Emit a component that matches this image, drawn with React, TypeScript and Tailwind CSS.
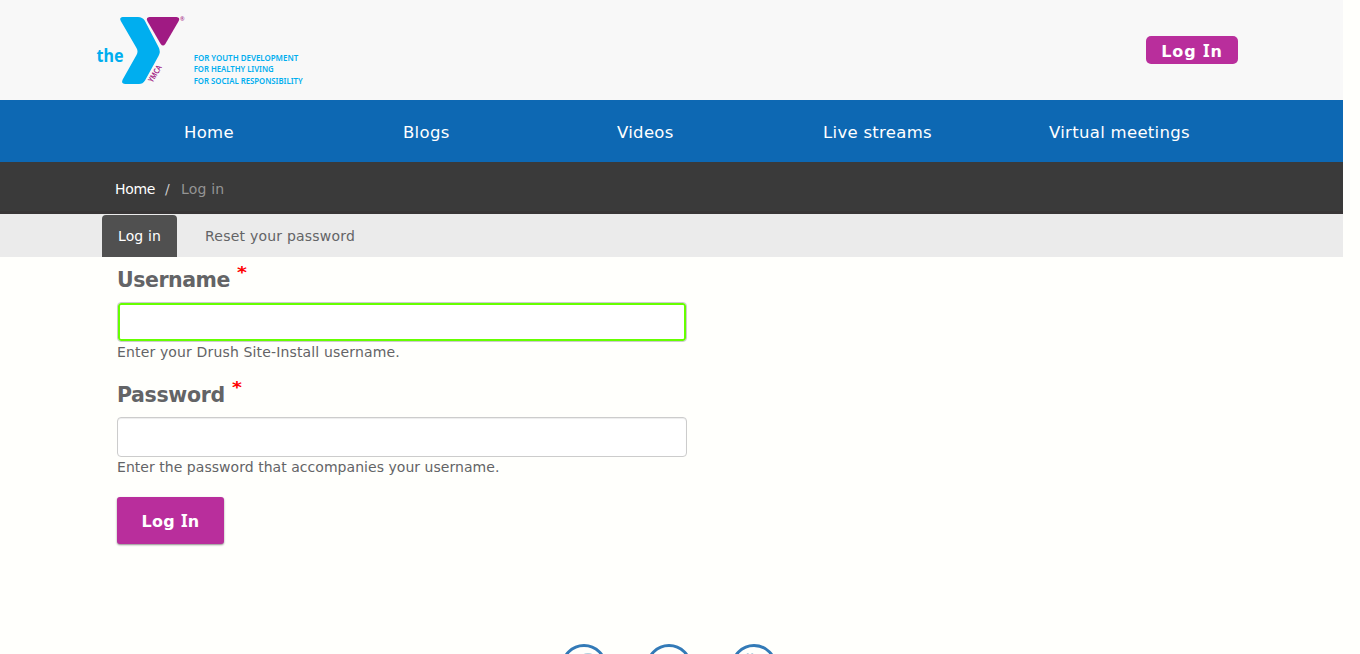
import { FaFacebookF, FaTwitter } from "react-icons/fa";

const navItems = [
  { label: "Home", box: "w-[51px] ml-[184px]" },
  { label: "Blogs", box: "w-[47px] ml-[168px]" },
  { label: "Videos", box: "w-[57px] ml-[167px]" },
  { label: "Live streams", box: "w-[109px] ml-[149px]" },
  { label: "Virtual meetings", box: "w-[141px] ml-[117px]" },
];

function Logo() {
  return (
    <svg className="ml-[90px] mt-[5px] h-[90px] w-[230px] overflow-visible" viewBox="90 5 230 90">
      <path
        d="M122.5 17H138Q142.500 17 144.700 20.500L158.500 47Q161 51.500 158.500 56L145 80.500Q142.800 84 139 84H125Q120.700 83.500 122.700 79.500L136.500 55Q138.500 51.500 136.500 48L120.800 21Q119 17.700 122.500 17Z"
        fill="#00aeef"
      />
      <path
        d="M149.500 17H176.500Q180.500 17.500 178.700 21L165.300 44Q163 47 160.700 44L147.300 21Q145.700 17.500 149.500 17Z"
        fill="#a01a83"
      />
      <g fontFamily="'Noto Sans', sans-serif" fontWeight="700" fill="#00aeef">
        <text x="96.500" y="61.700" fontSize="17.500" textLength="27" lengthAdjust="spacingAndGlyphs">the</text>
        <g fontSize="8.600" fontWeight="600">
          <text x="193.700" y="61" textLength="104.500" lengthAdjust="spacingAndGlyphs">FOR YOUTH DEVELOPMENT</text>
          <text x="193.700" y="72.400" textLength="80" lengthAdjust="spacingAndGlyphs">FOR HEALTHY LIVING</text>
          <text x="193.700" y="83.900" textLength="109" lengthAdjust="spacingAndGlyphs">FOR SOCIAL RESPONSIBILITY</text>
        </g>
      </g>
      <g fill="#a01a83" fontFamily="'Noto Sans', sans-serif">
        <text transform="translate(152.600 83) rotate(-59)" fontSize="8" fontWeight="600" textLength="18.500" lengthAdjust="spacingAndGlyphs">YMCA</text>
        <text x="180" y="21.300" fontSize="5.500">®</text>
      </g>
    </svg>
  );
}

function LogInText() {
  return (
    <span className="whitespace-nowrap">
      Log <span className="font-['Noto_Sans',sans-serif] text-[17px] leading-none">I</span>n
    </span>
  );
}

function YoutubeIcon({ size }: { size: number }) {
  return (
    <svg width={size} height={size} viewBox="0 0 28 28" fill="none" stroke="currentColor" strokeWidth="1.800">
      <path d="M7.500 0L10 6.500L12.500 0M10 6V11" />
      <ellipse cx="15.500" cy="7.500" rx="2" ry="3" />
      <path d="M19.500 4V9Q21 11.500 23 9V4M23 4V11" />
      <rect x="3" y="14" width="22" height="12" rx="3" />
    </svg>
  );
}

function Field(props: { id: string; label: string; hint: string; type: string; focused?: boolean; labelBox: string; hintBox: string }) {
  return (
    <div className="h-[115px] w-[570px]">
      <div className="flex h-[45px] pt-[9px]">
        <label htmlFor={props.id} className={`whitespace-nowrap text-[20.500px] leading-[28px] font-bold ${props.labelBox}`}>
          {props.label}
        </label>
        <span className="ml-[7px] -mt-[8px] h-[28px] shrink-0 scale-y-[0.8] text-[19px] leading-[28px] font-bold text-[#f00]">*</span>
      </div>
      <input
        id={props.id}
        type={props.type}
        className={`block h-[40px] w-full rounded-[4px] border border-[#ccc] bg-white px-3 outline-none ${
          props.focused ? "shadow-[inset_0_0_0_2px_#66ff00]" : "shadow-[inset_0_1px_1px_rgba(0,0,0,0.075)]"
        }`}
      />
      <p className={`whitespace-nowrap text-[14px] leading-[20px] ${props.hintBox}`}>{props.hint}</p>
    </div>
  );
}

export default function App() {
  return (
    <div className="h-[654px] overflow-hidden bg-[#fffffc] font-['DejaVu_Sans',Verdana,sans-serif] text-[#636466]">
      <div className="w-[1343px]">
        <header className="flex h-[100px] items-start justify-between bg-[#f8f8f8]">
          <Logo />
          <a className="mt-[36px] mr-[105px] flex h-[28px] w-[92px] items-center justify-center rounded-[5px] bg-[#b92e9c] pt-[3px] text-[16px] font-bold tracking-[0.900px] text-white">
            <LogInText />
          </a>
        </header>
        <nav className="flex h-[62px] items-center bg-[#0d68b3] pt-[5px] text-[16.500px] tracking-[0.300px] text-white">
          {navItems.map((item) => (
            <a key={item.label} className={`whitespace-nowrap ${item.box}`}>
              {item.label}
            </a>
          ))}
        </nav>
        <div className="flex h-[52px] items-center border-b-[3px] border-[#383536] bg-[#3a3a3a] pt-[5px] pl-[115px] text-[14px]">
          <a className="w-[40px] tracking-[-0.300px] text-white">Home</a>
          <span className="ml-[10px] w-[16px] text-[#ccc]">/</span>
          <span className="tracking-[0.200px] whitespace-nowrap text-[#949494]">Log in</span>
        </div>
        <div className="flex h-[43px] items-end bg-[#ebebeb] pl-[102px] text-[14px]">
          <a className="flex h-[42px] w-[75px] items-center justify-center rounded-t-[4px] bg-[#505050] tracking-[0.150px] text-white">
            Log in
          </a>
          <a className="ml-[28px] flex h-[42px] items-center whitespace-nowrap tracking-[0.220px]">Reset your password</a>
        </div>
        <main className="h-[387px] pl-[117px]">
          <Field
            id="username"
            type="text"
            label="Username"
            hint="Enter your Drush Site-Install username."
            focused
            labelBox="w-[113px] tracking-[-0.450px]"
            hintBox="tracking-[0.150px]"
          />
          <Field
            id="password"
            type="password"
            label="Password"
            hint="Enter the password that accompanies your username."
            labelBox="w-[108px] tracking-[-0.350px]"
            hintBox="tracking-[0.040px]"
          />
          <button className="mt-[10px] flex h-[47px] w-[107px] items-center justify-center rounded-[3px] bg-[#b92e9c] pt-[2px] text-[16px] font-bold tracking-[0.300px] text-white shadow-[0_1px_2px_rgba(0,0,0,0.45)]">
            <LogInText />
          </button>
        </main>
        <footer className="flex gap-[39px] pl-[561px] text-[#b5d2e0]">
          {[FaFacebookF, FaTwitter, YoutubeIcon].map((Icon, i) => (
            <a key={i} className="flex size-[46px] shrink-0 items-center justify-center rounded-full border-[3px] border-[#337ab7]">
              <Icon size={28} />
            </a>
          ))}
        </footer>
      </div>
    </div>
  );
}
